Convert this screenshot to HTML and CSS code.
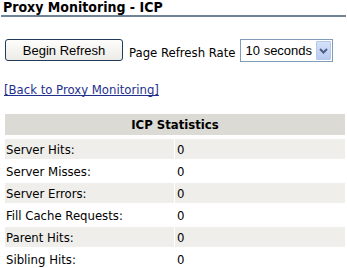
FILE: index.html
```html
<!DOCTYPE html>
<html>
<head>
<meta charset="utf-8">
<link rel="stylesheet" href="styles.css">
</head>
<body>
<h1 class="title">Proxy Monitoring - ICP</h1>
<div class="controls">
  <button class="btn" type="button">Begin Refresh</button>
  <span class="rate-label">Page Refresh Rate</span>
  <div class="select">
    <span class="select-value">10 seconds</span>
    <span class="select-arrow">
      <svg width="9" height="6" viewBox="0 0 9 6"><path d="M1 1 L4.5 4.5 L8 1" fill="none" stroke="#4d6185" stroke-width="2"/></svg>
    </span>
  </div>
</div>
<a class="back" href="#">[Back to Proxy Monitoring]</a>
<table class="stats">
  <thead>
    <tr><th colspan="2">ICP Statistics</th></tr>
  </thead>
  <tbody>
    <tr class="shade"><td class="label">Server Hits:</td><td>0</td></tr>
    <tr><td class="label">Server Misses:</td><td>0</td></tr>
    <tr class="shade"><td class="label">Server Errors:</td><td>0</td></tr>
    <tr><td class="label">Fill Cache Requests:</td><td>0</td></tr>
    <tr class="shade"><td class="label">Parent Hits:</td><td>0</td></tr>
    <tr><td class="label">Sibling Hits:</td><td>0</td></tr>
  </tbody>
</table>
</body>
</html>
```
FILE: styles.css
```css
html, body {
  margin: 0;
  padding: 0;
  background: #fff;
}
body {
  font-family: "DejaVu Sans Condensed", "DejaVu Sans", sans-serif;
  font-size: 13px;
  color: #000;
  width: 347px;
}
.title {
  margin: 0 1px 0 1px;
  padding: 1px 0 1px 2px;
  font-size: 14px;
  font-weight: bold;
  line-height: 13px;
  border-bottom: 2px solid #6e8393;
  color: #000;
}
.controls {
  display: flex;
  align-items: center;
  margin-top: 21px;
  padding-left: 5px;
}
.btn {
  box-sizing: border-box;
  width: 118px;
  height: 22px;
  margin: 0;
  padding: 0;
  font-family: "Liberation Sans", Arial, sans-serif;
  font-size: 13px;
  color: #000;
  background: linear-gradient(#fdfdfb, #ecebe6);
  border: 1px solid #1f3c5c;
  border-radius: 3px;
}
.rate-label {
  margin-left: 6px;
  margin-top: 4px;
  font-size: 13px;
}
.select {
  box-sizing: border-box;
  display: flex;
  align-items: center;
  width: 93px;
  height: 23px;
  margin-left: 4px;
  margin-top: 1px;
  border: 1px solid #7f9db9;
  background: #fff;
  padding: 1px 1px 1px 5px;
}
.select-value {
  flex: 1;
  font-family: "Liberation Sans", Arial, sans-serif;
  font-size: 13px;
  color: #000;
}
.select-arrow {
  box-sizing: border-box;
  width: 15px;
  height: 19px;
  display: flex;
  align-items: center;
  justify-content: center;
  background: linear-gradient(#d6e1f9, #b9cbf1);
  border: 1px solid #b5c8ee;
  border-radius: 1px;
}
.back {
  display: inline-block;
  margin: 20px 0 0 4px;
  color: #1e2f8e;
  font-size: 13px;
  text-decoration: underline;
  text-decoration-skip-ink: none;
}
.stats {
  width: 342px;
  margin: 15px 0 0 4px;
  border-collapse: separate;
  border-spacing: 1px 2px;
}
.stats th {
  background: #dcdad4;
  font-weight: bold;
  height: 21px;
  padding: 0;
  text-align: center;
  font-size: 13px;
}
.stats thead tr th {
  border-bottom: 2px solid #fff;
}
.stats td {
  height: 20px;
  padding: 0 0 0 1px;
  font-size: 13px;
}
.stats td.label {
  width: 168px;
}
.stats td + td {
  padding-left: 2px;
}
.stats tr.shade td {
  background: #efeeea;
}
```
